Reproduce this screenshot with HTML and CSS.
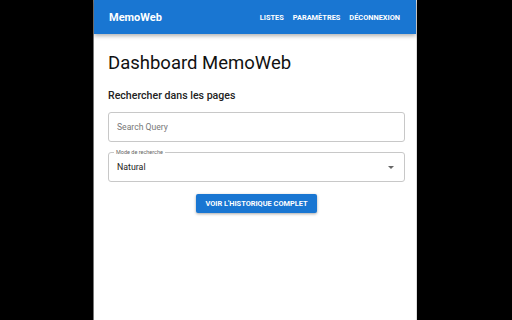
FILE: index.html
```
<!DOCTYPE html>
<html lang="fr">
<head>
<meta charset="utf-8">
<link rel="stylesheet" href="styles.css">
</head>
<body>
<div class="page">
  <header class="appbar">
    <div class="brand">MemoWeb</div>
    <nav class="nav">
      <span class="nav-item">Listes</span>
      <span class="nav-item">Paramètres</span>
      <span class="nav-item">Déconnexion</span>
    </nav>
  </header>
  <main class="content">
    <h1 class="title">Dashboard MemoWeb</h1>
    <h2 class="subtitle">Rechercher dans les pages</h2>
    <div class="field">
      <span class="placeholder">Search Query</span>
    </div>
    <div class="field select">
      <span class="legend">Mode de recherche</span>
      <span class="value">Natural</span>
      <span class="arrow"></span>
    </div>
    <div class="actions">
      <button class="btn">Voir l'historique complet</button>
    </div>
  </main>
</div>
</body>
</html>
```
FILE: styles.css
```
html, body {
  margin: 0;
  padding: 0;
  background: #000;
  font-family: Roboto, "Liberation Sans", sans-serif;
}
.page {
  width: 322px;
  margin-left: 94px;
  min-height: 320px;
  background: #fff;
  box-shadow: -1px 0 0 #777;
  border-right: 1px solid #ddd;
}
.appbar {
  height: 34px;
  background: #1976d2;
  color: #fff;
  display: flex;
  align-items: center;
  justify-content: space-between;
  padding: 0 16px 0 15px;
  box-shadow: 0 2px 4px rgba(0,0,0,0.3);
  position: relative;
}
.brand {
  font-size: 11px;
  font-weight: 700;
}
.nav {
  display: flex;
  gap: 9px;
}
.nav-item {
  font-size: 7.4px;
  font-weight: 700;
  text-transform: uppercase;
}
.content {
  padding: 17px 11px 0 14px;
}
.title {
  margin: 0;
  font-size: 18.5px;
  font-weight: 400;
  color: #111;
  line-height: 24px;
}
.subtitle {
  margin: 14px 0 0;
  font-size: 10.6px;
  font-weight: 500;
  color: #222;
  line-height: 14px;
}
.field {
  margin-top: 9px;
  height: 30px;
  border: 1px solid #c8c8c8;
  border-radius: 3px;
  box-sizing: border-box;
  display: flex;
  align-items: center;
  padding: 0 8px;
  position: relative;
}
.placeholder {
  font-size: 8.6px;
  color: #777;
}
.select {
  margin-top: 10px;
}
.legend {
  position: absolute;
  left: 5px;
  top: -4px;
  padding: 0 2px;
  background: #fff;
  font-size: 5.5px;
  line-height: 7px;
  color: #666;
}
.value {
  font-size: 8.8px;
  color: #222;
}
.arrow {
  margin-left: auto;
  margin-right: 2px;
  width: 0;
  height: 0;
  border-left: 3px solid transparent;
  border-right: 3px solid transparent;
  border-top: 3px solid #666;
}
.actions {
  display: flex;
  justify-content: center;
  margin-top: 12px;
}
.btn {
  height: 19px;
  padding: 0 9px;
  border: none;
  border-radius: 2px;
  background: #1976d2;
  color: #fff;
  font-family: Roboto, "Liberation Sans", sans-serif;
  font-size: 7.4px;
  font-weight: 700;
  text-transform: uppercase;
  box-shadow: 0 1px 3px rgba(0,0,0,0.35);
}
```
